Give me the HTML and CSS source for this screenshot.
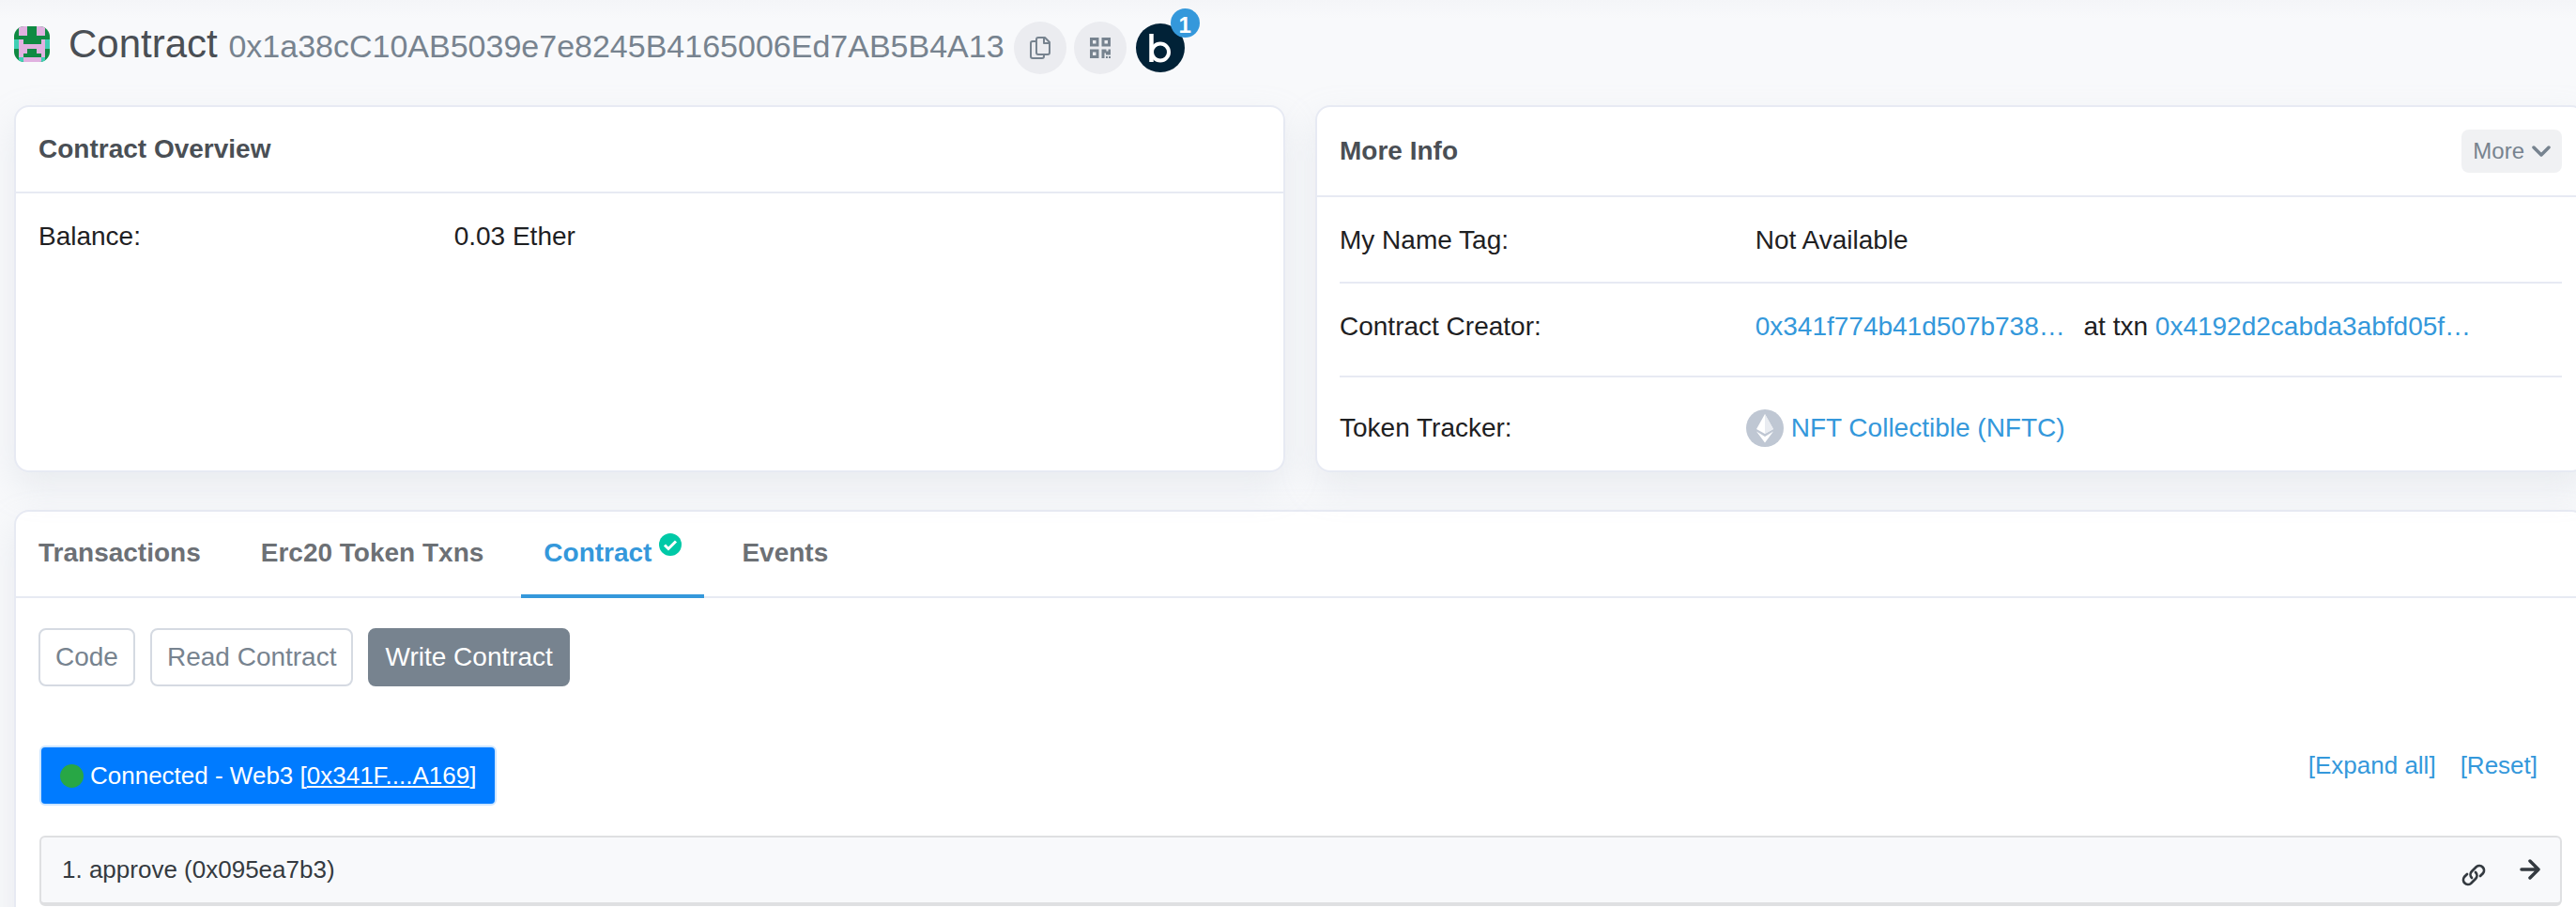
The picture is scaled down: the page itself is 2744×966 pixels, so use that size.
FILE: index.html
```html
<!DOCTYPE html>
<html lang="en">
<head>
<meta charset="utf-8">
<title>Contract 0x1a38cC10AB5039e7e8245B4165006Ed7AB5B4A13</title>
<link rel="stylesheet" href="styles.css">
</head>
<body>
<main class="page">
  <header class="page-header">
    <svg class="identicon" viewBox="0 0 8 8" shape-rendering="crispEdges" aria-hidden="true">
      <rect width="8" height="8" fill="#0f8a43"/>
      <path fill="#e0b1e0" d="M1 0h2v2H1zM5 0h2v2H5zM1 3h1v1h4V3h1v4H6V6H5V5H3v1H2v1H1zM2 7h4v1H2z"/>
      <path fill="#3fcfb4" d="M0 3h1v2H0zM7 3h1v2H7zM1 7h1v1H1zM6 7h1v1H6z"/>
    </svg>
    <h1 class="title">Contract <span class="address">0x1a38cC10AB5039e7e8245B4165006Ed7AB5B4A13</span></h1>
    <div class="header-actions">
      <button class="round-btn" type="button" aria-label="Copy address">
        <svg width="22" height="24" viewBox="0 0 22 24" fill="none" stroke="currentColor" stroke-width="2" stroke-linejoin="round"><path d="M9 1h7l5 5v11a2 2 0 0 1-2 2H9a2 2 0 0 1-2-2V3a2 2 0 0 1 2-2zM15 1v6h6M7 5H3a2 2 0 0 0-2 2v14a2 2 0 0 0 2 2h10a2 2 0 0 0 2-2v-2"/></svg>
      </button>
      <button class="round-btn" type="button" aria-label="Show QR code">
        <svg width="22" height="22" viewBox="0 0 22 22" fill="currentColor"><path fill-rule="evenodd" d="M0 0h9.500v9.500H0zM3 3v3.500h3.500V3zM12.500 0H22v9.500h-9.500zM15.500 3v3.500H19V3zM0 12.500h9.500V22H0zM3 15.500V19h3.500v-3.500zM12.500 12.500h5v2h2v-2H22v6h-5v-2h-1.500V22h-3zM17 20h2v2h-2zM20 20h2v2h-2z"/></svg>
      </button>
      <a class="brand" href="#" aria-label="Blockscan">
        <svg width="52" height="52" viewBox="0 0 52 52"><circle cx="26" cy="26" r="26" fill="#012237"/><path d="M16.500 11v30" stroke="#fff" stroke-width="4.500" fill="none"/><circle cx="26" cy="30.500" r="9" fill="none" stroke="#fff" stroke-width="4"/></svg>
        <span class="badge">1</span>
      </a>
    </div>
  </header>

  <div class="cards">
    <section class="card">
      <div class="card-header"><h2 class="card-title">Contract Overview</h2></div>
      <dl class="info">
        <div class="info-row"><dt>Balance:</dt><dd>0.03 Ether</dd></div>
      </dl>
    </section>
    <section class="card">
      <div class="card-header">
        <h2 class="card-title">More Info</h2>
        <button class="more-btn" type="button">More
          <svg width="20" height="12" viewBox="0 0 20 12" fill="none" stroke="currentColor" stroke-width="3.500" stroke-linecap="round" stroke-linejoin="round"><path d="M2 2l8 8 8-8"/></svg>
        </button>
      </div>
      <dl class="info">
        <div class="info-row"><dt>My Name Tag:</dt><dd>Not Available</dd></div>
        <div class="info-row creator"><dt>Contract Creator:</dt><dd><a class="hash" href="#">0x341f774b41d507b738…</a> at txn <a href="#">0x4192d2cabda3abfd05f…</a></dd></div>
        <div class="info-row tracker"><dt>Token Tracker:</dt><dd>
          <svg class="token" width="40" height="40" viewBox="0 0 40 40" aria-hidden="true"><circle cx="20" cy="20" r="20" fill="#bfc7d3"/><path fill="#fff" d="M20 5l9 16-9 5-9-5zM11 23.500l9 5.500 9-5.500L20 35.500z"/><path fill="#e9ecf1" d="M20 5l9 16-9 5z"/></svg>
          <a href="#">NFT Collectible (NFTC)</a></dd></div>
      </dl>
    </section>
  </div>

  <section class="card">
    <nav class="tabs">
      <a class="tab" href="#">Transactions</a>
      <a class="tab" href="#">Erc20 Token Txns</a>
      <a class="tab active" href="#">Contract
        <svg class="check" width="24" height="24" viewBox="0 0 24 24" aria-hidden="true"><circle cx="12" cy="12" r="12" fill="#00c9a7"/><path d="M6 12.500l4 4 8-8" fill="none" stroke="#fff" stroke-width="3"/></svg>
      </a>
      <a class="tab" href="#">Events</a>
    </nav>
    <div class="panel">
      <div class="modes">
        <button class="mode" type="button">Code</button>
        <button class="mode" type="button">Read Contract</button>
        <button class="mode selected" type="button">Write Contract</button>
      </div>
      <div class="toolbar">
        <div class="connected"><span class="dot"></span><span>Connected - Web3 [<a href="#">0x341F....A169</a>]</span></div>
        <div class="links"><a href="#">[Expand all]</a><a href="#">[Reset]</a></div>
      </div>
      <div class="method">
        <span>1. approve (0x095ea7b3)</span>
        <div class="method-actions">
          <a href="#" class="permalink" aria-label="Copy link"><svg width="26" height="26" viewBox="0 0 26 26" fill="none" stroke="currentColor" stroke-width="2.700" stroke-linecap="round"><path d="M11 16a5 5 0 0 1 0-7l5-5a5 5 0 0 1 7 7l-3 3M15 10a5 5 0 0 1 0 7l-5 5a5 5 0 0 1-7-7l3-3"/></svg></a>
          <button class="expand" type="button" aria-label="Expand"><svg width="22" height="22" viewBox="0 0 22 22" fill="none" stroke="currentColor" stroke-width="3.500" stroke-linecap="round" stroke-linejoin="round"><path d="M2 11h17M11 2l9 9-9 9"/></svg></button>
        </div>
      </div>
    </div>
  </section>
</main>
</body>
</html>
```
FILE: styles.css
```css
* { box-sizing: border-box; }

body {
  margin: 0;
  overflow: hidden;
  font-family: "Liberation Sans", Arial, sans-serif;
  font-size: 28px;
  line-height: 42px;
  color: #1e2022;
  background: linear-gradient(#f4f5f8, #f8f9fb 20px);
}

a { color: #3498db; text-decoration: none; }
h1, h2, dl, dd { margin: 0; }
button { font: inherit; border: 0; cursor: pointer; }
svg { display: block; flex: none; }

/* The card area runs slightly past the right edge of the window. */
.page { margin: 0 -11px 0 15px; }

.page-header {
  display: flex;
  align-items: center;
  height: 112px;
  padding-bottom: 10px;
}

.identicon { width: 38px; height: 38px; margin: 0 20px 8px 0; border-radius: 11px; }
.title { font-size: 42px; font-weight: 400; color: #4a4f55; padding-bottom: 6px; }
.address { font-size: 34px; color: #77838f; }

.header-actions { display: flex; align-items: center; gap: 8px; margin-left: 10px; }
.round-btn {
  display: grid;
  place-items: center;
  width: 56px;
  height: 56px;
  padding: 0;
  border-radius: 50%;
  color: #77838f;
  background: #ebecf0;
}
.brand { position: relative; margin-left: 2px; }
.badge {
  position: absolute;
  top: -16px;
  right: -16px;
  width: 31px;
  height: 31px;
  border-radius: 50%;
  background: #3498db;
  color: #fff;
  font-size: 24px;
  font-weight: 700;
  line-height: 36px;
  text-align: center;
}

.cards {
  display: grid;
  grid-template-columns: 1fr 1fr;
  gap: 32px;
  margin-bottom: 40px;
}

.card {
  background: #fff;
  border: 2px solid #e7eaf3;
  border-radius: 16px;
  box-shadow: 0 16px 36px rgba(189, 197, 209, 0.25);
}
.card-header {
  display: flex;
  align-items: center;
  justify-content: space-between;
  padding: 24px;
  border-bottom: 2px solid #e7eaf3;
}
.card-title { font-size: 28px; color: #4a4f55; }
.more-btn {
  display: flex;
  align-items: center;
  gap: 8px;
  padding: 2px 12px;
  border-radius: 8px;
  font-size: 24px;
  color: #77838f;
  background: #f0f1f3;
}

.info { padding: 0 24px; }
.info-row { display: flex; padding: 25px 0 23px; }
.info-row + .info-row { border-top: 2px solid #e7eaf3; }
.info-row dt { flex: 0 0 34%; }
.info-row dd { display: flex; align-items: center; gap: 8px; white-space: pre; }
.info-row.creator { padding-bottom: 31px; }
.creator dd { display: block; }
.hash { margin-right: 12px; }
.info-row.tracker { padding: 33px 0 24px; }
.token { margin-left: -10px; }

.tabs {
  display: flex;
  gap: 16px;
  border-bottom: 2px solid #e7eaf3;
}
.tab {
  display: flex;
  gap: 8px;
  margin-bottom: -2px;
  padding: 23px 24px;
  border-bottom: 4px solid transparent;
  font-weight: 700;
  color: #6c7075;
}
.tab.active { color: #3498db; border-color: #3498db; }

.panel { padding: 32px 24px; }
.modes { display: flex; gap: 16px; }
.mode {
  padding: 8px 16px;
  border: 2px solid #d5dae2;
  border-radius: 8px;
  color: #77838f;
  background: #fff;
}
.mode.selected { color: #fff; background: #77838f; border-color: #77838f; }

.toolbar {
  display: flex;
  justify-content: space-between;
  margin: 63px 0 32px 1px;
  font-size: 26px;
}
.connected {
  display: flex;
  align-items: center;
  gap: 7px;
  padding: 9px 20px;
  border: 2px solid #cce5ff;
  border-radius: 6px;
  color: #fff;
  background: #007bff;
}
.connected a { color: #fff; text-decoration: underline; }
.dot { width: 25px; height: 25px; border-radius: 50%; background: #28a745; }
.links { display: flex; gap: 26px; padding-right: 26px; }

.method {
  display: flex;
  align-items: center;
  justify-content: space-between;
  margin-left: 1px;
  padding: 13px 21px 14px 22px;
  border: 2px solid #dfe0e2;
  border-bottom-width: 4px;
  border-radius: 6px;
  font-size: 26px;
  color: #343a40;
  background: #f8f9fb;
}
.method-actions { display: flex; align-items: center; gap: 36px; }
.permalink { color: #343a40; padding-top: 12px; }
.expand { padding: 0; color: #343a40; background: none; }
```
